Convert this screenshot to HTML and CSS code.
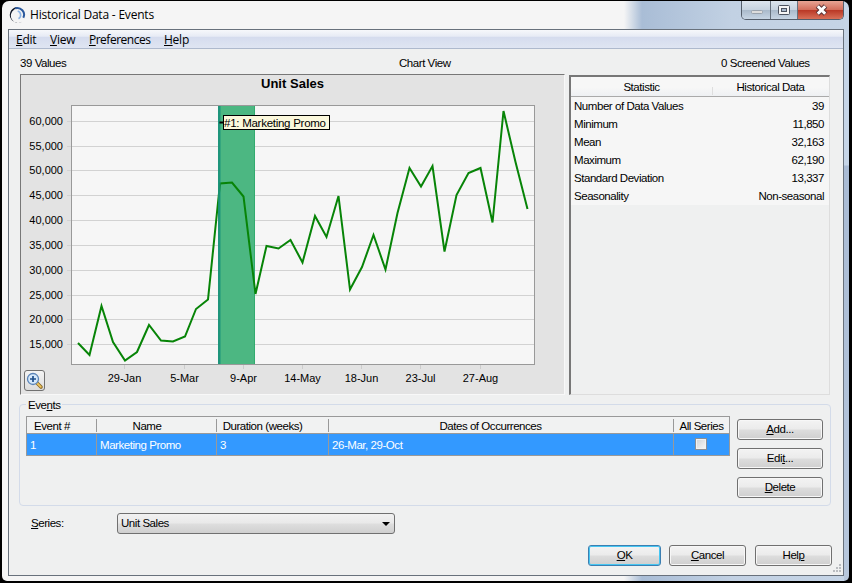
FILE: index.html
```html
<!DOCTYPE html>
<html lang="en">
<head>
    <meta charset="UTF-8">
    <meta name="viewport" content="width=device-width, initial-scale=1.0">
    <title>Historical Data - Events</title>
    <link rel="stylesheet" href="styles.css">
</head>
<body>
    <div class="window">
        <div class="titlebar">
            <svg class="logo" width="18" height="18" viewBox="0 0 18 18">
                <path d="M9.500 1A8 8 0 1 0 14 15.800A6.700 6.700 0 1 1 6.300 3.400Z" fill="#111827"/>
                <path d="M7 2.400A6.700 6.700 0 0 1 15.300 11.700" fill="none" stroke="#2c5a9e" stroke-width="2"/>
                <path d="M9.700 5A4.300 4.300 0 0 1 10.500 12.800" fill="none" stroke="#8db4e4" stroke-width="1.600"/>
            </svg>
            <span class="title">Historical Data - Events</span>
            <div class="controls">
                <div class="control"><svg width="28" height="18"><rect x="9.500" y="9.500" width="11" height="3" rx="1" fill="#ddd" stroke="#9aa3ad"/></svg></div>
                <div class="control"><svg width="26" height="18"><rect x="7.500" y="4.500" width="11" height="9" rx="1" fill="#f5f5f5" stroke="#4c5360"/><rect x="10.500" y="7.500" width="5" height="3" fill="#a9b9cd" stroke="#4c5360"/></svg></div>
                <div class="control close"><svg width="46" height="18"><path d="M19.500 5L27.500 13M27.500 5L19.500 13" stroke="#5d3335" stroke-width="5"/><path d="M19.800 5.300L27.200 12.700M27.200 5.300L19.800 12.700" stroke="#fff" stroke-width="3"/></svg></div>
            </div>
        </div>

        <div class="client">
            <div class="menu">
                <span class="menu-edit"><u>E</u>dit</span>
                <span class="menu-view"><u>V</u>iew</span>
                <span class="menu-pref"><u>P</u>references</span>
                <span class="menu-help"><u>H</u>elp</span>
            </div>

            <div class="labels">
                <span>39 Values</span>
                <span class="view-name">Chart View</span>
                <span class="screened">0 Screened Values</span>
            </div>

            <div class="panels">
                <div class="chart">
                    <svg width="545" height="321" viewBox="20 74 545 321">
                        <rect x="71.500" y="105.500" width="463" height="259" fill="#f6f6f6"/>
                        <g id="grid"></g>
                        <rect x="71.500" y="105.500" width="463" height="259" fill="none" stroke="#999"/>
                        <rect x="218" y="106" width="37" height="258" fill="#4cb782"/>
                        <path d="M254.500 106V364" stroke="#32ab6f"/>
                        <path id="sales" fill="none" stroke="#078407" stroke-width="2"/>
                        <rect x="218" y="106" width="2.500" height="258" fill="#1a917a" fill-opacity=".9"/>
                        <path d="M219.500 122.500H223" stroke="#000" stroke-width="2"/>
                        <rect x="223.500" y="115.500" width="106" height="14" fill="#fbf8dc" stroke="#000"/>
                        <text class="tip" x="224" y="127" textLength="102">#1: Marketing Promo</text>
                        <text class="chart-title" x="292.500" y="88" textLength="63">Unit Sales</text>
                    </svg>
                    <div class="zoom-btn">
                        <svg width="19" height="19" viewBox="0 0 19 19">
                            <path d="M11.500 11.500L16 16" stroke="#8b6a2a" stroke-width="3.600" stroke-linecap="round"/>
                            <path d="M12 12L15.800 15.800" stroke="#f0c65a" stroke-width="1.800" stroke-linecap="round"/>
                            <circle cx="8" cy="8" r="5.500" fill="#d5e8fa" stroke="#5a84b8" stroke-width="1.300"/>
                            <path d="M5 8H11M8 5V11" stroke="#1f4f8c" stroke-width="1.700"/>
                        </svg>
                    </div>
                </div>

                <div class="stats">
                    <div class="stats-head"><span>Statistic</span><span>Historical Data</span></div>
                    <div class="stats-row"><span>Number of Data Values</span><span>39</span></div>
                    <div class="stats-row"><span>Minimum</span><span>11,850</span></div>
                    <div class="stats-row"><span>Mean</span><span>32,163</span></div>
                    <div class="stats-row"><span>Maximum</span><span>62,190</span></div>
                    <div class="stats-row"><span>Standard Deviation</span><span>13,337</span></div>
                    <div class="stats-row"><span>Seasonality</span><span>Non-seasonal</span></div>
                </div>
            </div>

            <div class="events">
                <span class="legend">Eve<u>n</u>ts</span>
                <div class="table">
                    <div class="table-head">
                        <span>Event #</span><span>Name</span><span>Duration (weeks)</span><span>Dates of Occurrences</span><span>All Series</span>
                    </div>
                    <div class="table-row">
                        <span>1</span><span>Marketing Promo</span><span>3</span><span>26-Mar, 29-Oct</span><span><i class="check"></i></span>
                    </div>
                </div>
                <div class="event-buttons">
                    <button class="btn"><u>A</u>dd...</button>
                    <button class="btn">Edi<u>t</u>...</button>
                    <button class="btn"><u>D</u>elete</button>
                </div>
            </div>

            <div class="series">
                <span class="series-label"><u>S</u>eries:</span>
                <div class="combo">
                    <span>Unit Sales</span>
                    <svg width="8" height="4"><path d="M0 0H8L4 4Z"/></svg>
                </div>
            </div>

            <div class="footer">
                <button class="btn ok"><u>O</u>K</button>
                <button class="btn cancel"><u>C</u>ancel</button>
                <button class="btn help">Hel<u>p</u></button>
            </div>
            <svg class="grip" width="10" height="10" fill="#b9bcc0"><path d="M7 0h2v2h-2zM4 3h2v2h-2zM7 3h2v2h-2zM1 6h2v2h-2zM4 6h2v2h-2zM7 6h2v2h-2z"/></svg>
        </div>
    </div>

    <script>
        // chart coordinates
        const points = [
            [78, 343], [89.5, 355], [101.5, 306], [113, 342], [125, 360.5], [137, 352], [149, 325],
            [161, 340.5], [173, 341.5], [185, 336.5], [196, 309], [208, 299.5], [220, 183.5], [232, 182.5],
            [243.5, 196.5], [255.5, 294], [266.5, 246], [278.5, 248.5], [290.5, 240], [302.5, 262.5],
            [315, 216], [326.5, 237], [338.5, 196], [350, 289.5], [362, 267], [373.5, 235], [385.5, 269.5],
            [397.5, 213], [409.5, 168], [421, 186.5], [432.5, 166], [444.5, 251.5], [456.5, 195],
            [468.5, 173], [480.5, 168], [492.5, 222.5], [503.5, 111], [515.5, 162], [527.5, 209]
        ];
        const rows = { '60,000': 121, '55,000': 146, '50,000': 170, '45,000': 195, '40,000': 220,
            '35,000': 245, '30,000': 270, '25,000': 295, '20,000': 319, '15,000': 344 };
        const dates = { '29-Jan': 124, '5-Mar': 184, '9-Apr': 243, '14-May': 302, '18-Jun': 361, '23-Jul': 420, '27-Aug': 480 };

        document.getElementById('sales').setAttribute('d', 'M' + points.join('L'));

        let grid = '';
        for (const label in rows) {
            const y = rows[label] + 0.5;
            grid += `<path d="M67 ${y}H535" stroke="#d2d2d2"/><text class="axis" x="63" y="${y + 3.5}" text-anchor="end">${label}</text>`;
        }
        for (const label in dates) {
            const x = dates[label] + 0.5;
            grid += `<path d="M${x} 365V369" stroke="#ccc"/><text class="axis" x="${x}" y="382" text-anchor="middle">${label}</text>`;
        }
        document.getElementById('grid').innerHTML = grid;
    </script>
</body>
</html>
```
FILE: styles.css
```css
* {
    box-sizing: border-box;
}

body {
    margin: 0;
    height: 583px;
    overflow: hidden;
    padding: 1px 3px 2px 2px;
    background-color: #000;
    color: #000;
    font-family: "Liberation Sans", Arial, sans-serif;
    font-size: 11.5px;
    letter-spacing: -0.45px;
}

u {
    text-underline-offset: 1px;
}

.window {
    height: 580px;
    border-radius: 7px 7px 5px 5px;
    padding: 0 5px 5px 6px;
    background: linear-gradient(#c6d5e7 0, #c6d5e7 164px, #a9bbd4 165px, #b7c7dc 100%) right / 5px 100% no-repeat,
        linear-gradient(90deg, #f5f5f5 622px, #a9bdd6 640px, #c2d1e3 730px, #c5d4e6);
}

.titlebar {
    display: flex;
    height: 28px;
}

.logo {
    margin-top: 5px;
}

.title {
    margin: 5px 0 0 4px;
    font-family: "Open Sans", sans-serif;
    font-size: 12px;
    line-height: 18px;
    letter-spacing: -0.2px;
}

.controls {
    display: flex;
    width: 103px;
    height: 19px;
    margin-left: auto;
    border: 1px solid #535d6a;
    border-top: none;
    border-radius: 0 0 5px 5px;
    overflow: hidden;
}

.control {
    height: 18px;
    background: linear-gradient(#dce5ee, #c5d2df 50%, #a9b9ca 50%, #c7d5e4);
    border-right: 1px solid #66717e;
}

.close {
    width: 47px;
    border-right: none;
    background: linear-gradient(#e7a494, #d26c5a 50%, #b93624 50%, #d87058);
}

.client {
    position: relative;
    height: 547px;
    border: 1px solid #68717c;
    background-color: #eff0f0;
}

.menu {
    display: flex;
    height: 19px;
    padding-left: 7px;
    border-bottom: 1px solid #aeb9cd;
    background: linear-gradient(#f7f8fb, #e7ebf5 35%, #d5dcee 40%, #dfe5f2);
    font-family: "Open Sans", sans-serif;
    font-size: 12px;
    line-height: 20px;
    letter-spacing: -0.25px;
}

.menu-edit {
    width: 34px;
}

.menu-view {
    width: 39px;
}

.menu-pref {
    width: 75px;
    letter-spacing: -0.5px;
}

.labels {
    display: grid;
    grid-template-columns: 379px 322px 1fr;
    height: 25px;
    padding: 6px 0 0 11px;
    line-height: 16px;
}

.panels {
    display: flex;
    gap: 4px;
    height: 321px;
    padding-left: 11px;
}

.chart {
    position: relative;
    width: 545px;
    border: 1px solid;
    border-color: #777 #f8f8f8 #f8f8f8 #777;
    background-color: #e3e3e3;
}

.chart > svg {
    display: block;
    margin: -1px;
}

.axis {
    font-size: 11px;
    letter-spacing: 0;
}

.tip {
    font-size: 11.5px;
    letter-spacing: 0;
}

.chart-title {
    font-size: 13px;
    font-weight: bold;
    letter-spacing: 0;
    text-anchor: middle;
}

.zoom-btn {
    position: absolute;
    left: 3px;
    top: 295px;
    width: 21px;
    height: 21px;
    border: 1px solid #707070;
    border-radius: 3px;
    background: linear-gradient(#f4f4f4, #dcdcdc);
}

.stats {
    width: 261px;
    height: 320px;
    margin-top: 1px;
    border: 1px solid #ddd;
    border-top: 2px solid #777;
    border-left: 2px solid #777;
}

.stats-head {
    display: grid;
    grid-template-columns: 141px 1fr;
    height: 20px;
    border-bottom: 1px solid #aaa;
    background: linear-gradient(#f7f7f7 55%, #eef0f3);
    text-align: center;
    line-height: 20px;
}

.stats-head span + span {
    background: linear-gradient(#dedede, #dedede) left 10px / 1px 8px no-repeat;
}

.stats-row {
    display: flex;
    justify-content: space-between;
    height: 18px;
    padding: 0 5px 0 3px;
    background-color: #f6f6f6;
    line-height: 18px;
}

.events {
    position: relative;
    display: flex;
    gap: 7px;
    width: 812px;
    height: 102px;
    margin: 9px 0 0 10px;
    padding: 11px 0 0 6px;
    border: 1px solid #d3dbe9;
    border-radius: 4px;
}

.legend {
    position: absolute;
    left: 6px;
    top: -8px;
    padding: 0 2px;
    background-color: #eff0f0;
    line-height: 16px;
}

.table {
    width: 704px;
    height: 40px;
    border: 1px solid #999;
}

.table-head,
.table-row {
    display: grid;
    grid-template-columns: 70px 120px 112px 345px 1fr;
}

.table-head {
    height: 17px;
    border-bottom: 1px solid #999;
    background-color: #f1f2f2;
    text-align: center;
    line-height: 18px;
}

.table-head span:not(:last-child) {
    background: linear-gradient(#999, #999) right 2px / 1px 13px no-repeat;
}

.table-head span:first-child {
    padding-right: 20px;
}

.table-head span:nth-child(2) {
    padding-right: 20px;
}

.table-head span:nth-child(3) {
    padding-right: 21px;
}

.table-head span:nth-child(4) {
    padding-right: 22px;
}

.table-row {
    height: 21px;
    background-color: #3399ff;
    color: #fff;
    line-height: 22px;
}

.table-row span {
    padding-left: 3px;
    border-right: 1px solid #999;
}

.table-row span:last-child {
    border-right: none;
    padding: 4px 0 0 21px;
    line-height: 0;
}

.check {
    display: block;
    width: 12px;
    height: 12px;
    border: 1px solid #8a8f96;
    background: linear-gradient(135deg, #cfd2d6, #f8f8f8);
    box-shadow: inset 0 0 0 1px #f2f2f2;
}

.event-buttons {
    display: flex;
    flex-direction: column;
    gap: 8px;
    padding-top: 3px;
}

.btn {
    width: 86px;
    height: 21px;
    padding: 0 0 1px;
    border: 1px solid #707070;
    border-radius: 3px;
    background: linear-gradient(#f3f3f3, #ebebeb 48%, #dddddd 52%, #cfcfcf);
    box-shadow: inset 0 0 0 1px #f7f7f7;
    font: inherit;
    letter-spacing: inherit;
    line-height: 18px;
}

.series {
    display: flex;
    margin-top: 7px;
    padding-left: 22px;
    line-height: 21px;
}

.series-label {
    width: 86px;
}

.combo {
    display: flex;
    align-items: center;
    justify-content: space-between;
    width: 278px;
    height: 21px;
    padding: 0 4px 0 3px;
    border: 1px solid #707070;
    border-radius: 3px;
    background: linear-gradient(#f1f1f1, #e9e9e9 48%, #dedede 52%, #cfcfcf);
}

.footer {
    display: flex;
    margin-top: 11px;
    padding-left: 579px;
}

.ok {
    width: 73px;
    margin-right: 8px;
    border-color: #3c7fb1;
    box-shadow: inset 0 0 0 1px #46c6f2;
}

.cancel {
    width: 77px;
    margin-right: 9px;
}

.help {
    width: 77px;
}

.grip {
    position: absolute;
    right: 1px;
    bottom: 1px;
}
```
